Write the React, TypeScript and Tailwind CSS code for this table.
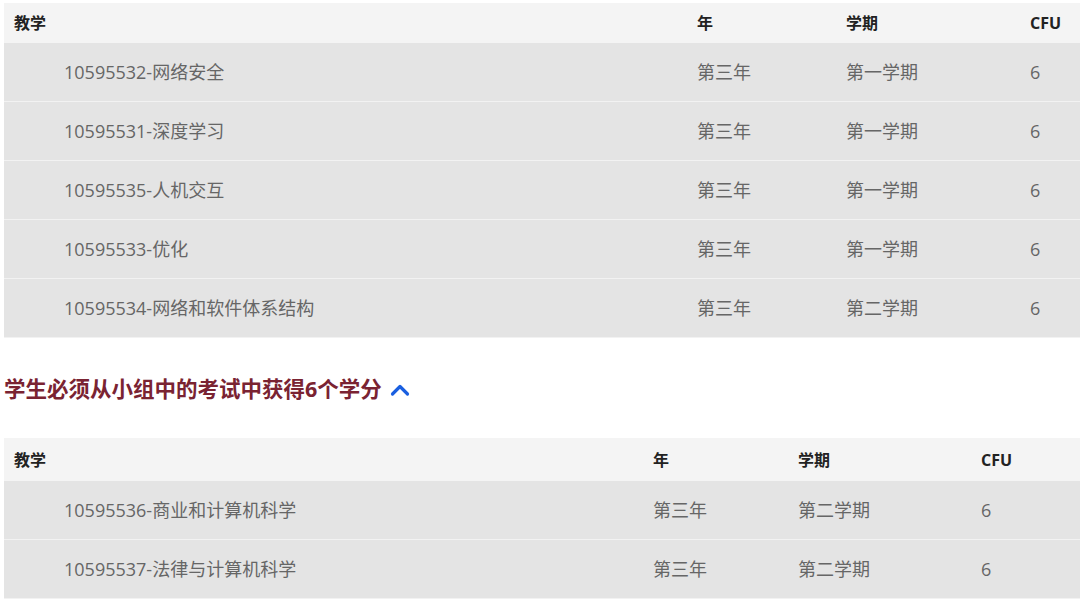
const font = "font-['Open_Sans','Noto_Sans_CJK_SC',sans-serif]";

type Row = { name: string; year: string; term: string; cfu: string };

const first: Row[] = [
  { name: "10595532-网络安全", year: "第三年", term: "第一学期", cfu: "6" },
  { name: "10595531-深度学习", year: "第三年", term: "第一学期", cfu: "6" },
  { name: "10595535-人机交互", year: "第三年", term: "第一学期", cfu: "6" },
  { name: "10595533-优化", year: "第三年", term: "第一学期", cfu: "6" },
  { name: "10595534-网络和软件体系结构", year: "第三年", term: "第二学期", cfu: "6" },
];

const second: Row[] = [
  { name: "10595536-商业和计算机科学", year: "第三年", term: "第二学期", cfu: "6" },
  { name: "10595537-法律与计算机科学", year: "第三年", term: "第二学期", cfu: "6" },
];

function CourseTable({ rows, cols, head }: { rows: Row[]; cols: string; head: string }) {
  return (
    <div className="w-full">
      <div className={`grid ${cols} ${head} items-center bg-[#f4f4f4] text-[16px] font-bold text-[#222]`}>
        <div className="pl-[10px]">教学</div>
        <div className="pl-[10px]">年</div>
        <div className="pl-[10px]">学期</div>
        <div className="pl-[10px]">CFU</div>
      </div>
      {rows.map((r) => (
        <div
          key={r.name}
          className={`grid ${cols} h-[59px] items-center border-b border-[#f2f2f2] bg-[#e4e4e4] text-[18px] text-[#666]`}
        >
          <div className="pl-[60px]">{r.name}</div>
          <div className="pl-[10px]">{r.year}</div>
          <div className="pl-[10px]">{r.term}</div>
          <div className="pl-[10px]">{r.cfu}</div>
        </div>
      ))}
    </div>
  );
}

export default function App() {
  return (
    <div className={`${font} h-[600px] w-[1080px] overflow-hidden bg-white pl-[4px] pt-[3px]`}>
      <CourseTable rows={first} cols="grid-cols-[683px_149px_184px_1fr]" head="h-[40px]" />
      <div className="flex h-[100px] items-center gap-[8px] pt-[2px]">
        <h3 className="text-[21.5px] font-bold text-[#7a2332]">学生必须从小组中的考试中获得6个学分</h3>
        <svg width="20" height="14" viewBox="0 0 20 14" className="mt-[1px]">
          <path d="M2.5 11 L10 3.5 L17.5 11" fill="none" stroke="#1a5fe0" strokeWidth="3.2" strokeLinecap="round" strokeLinejoin="round" />
        </svg>
      </div>
      <CourseTable rows={second} cols="grid-cols-[639px_145px_183px_1fr]" head="h-[43px]" />
    </div>
  );
}
